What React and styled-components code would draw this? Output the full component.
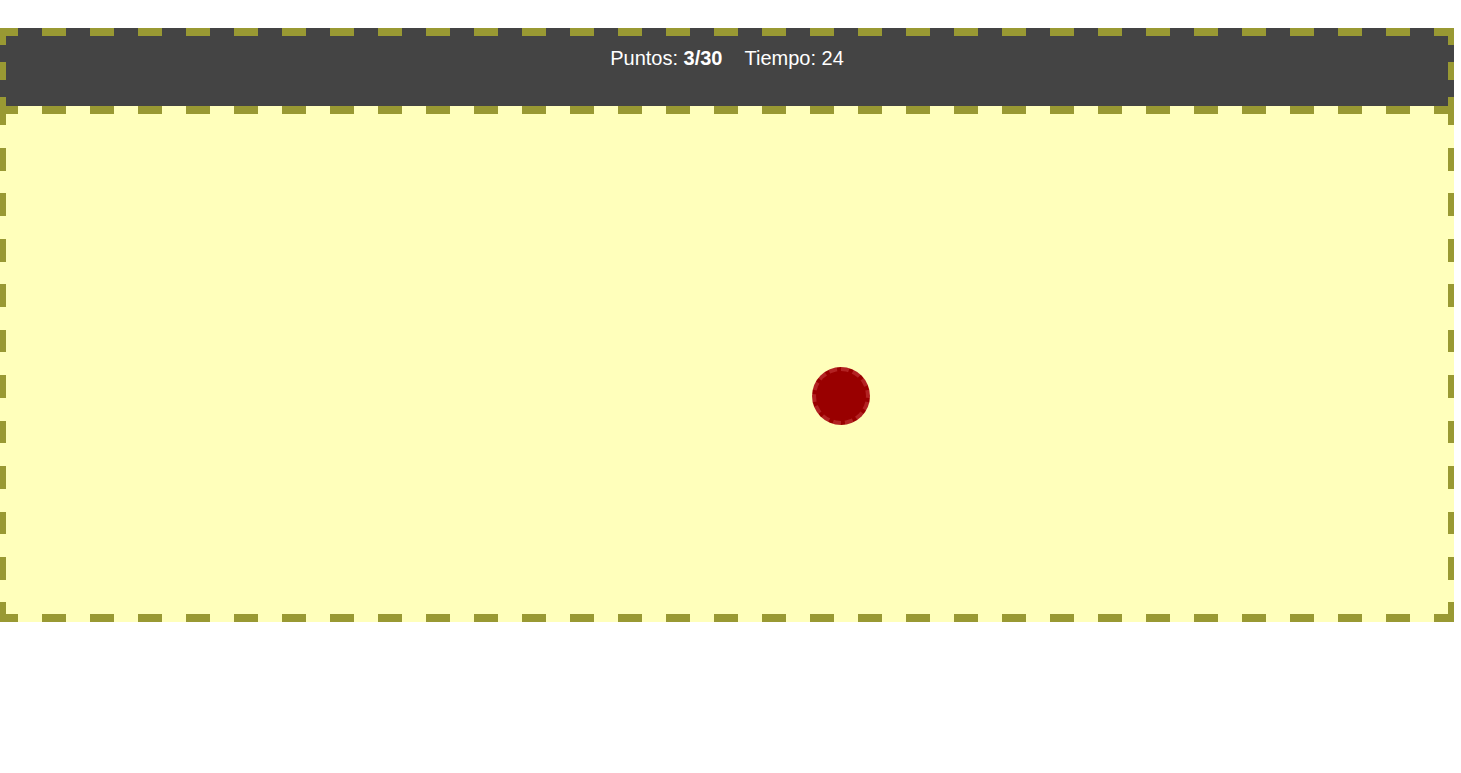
import React from "react"
import styled, { createGlobalStyle } from 'styled-components'

const OLIVE = '#999933'

const GlobalStyle = createGlobalStyle`
  body {
    margin: 0;
    background: #fff;
    font-family: "Liberation Sans", Arial, sans-serif;
  }
`

const App = () => {
  const target = { x: 806, y: 253 }

  return (
    <>
      <GlobalStyle />
      <Game>
        <Header>
          <Stat>Puntos: <b>3/30</b></Stat>
          <Stat>Tiempo: 24</Stat>
        </Header>
        <Board>
          <Target style={{ left: target.x, top: target.y }} />
        </Board>
      </Game>
    </>
  )
}

// dashed edges drawn as gradients so the dash rhythm matches
const hDash = `repeating-linear-gradient(90deg, ${OLIVE} 0 18px, transparent 18px 42px, ${OLIVE} 42px 48px)`

const Game = styled.div`
  width: 1454px;
  margin-top: 28px;
`

const Header = styled.header`
  height: 70px;
  box-sizing: content-box;
  border: solid transparent;
  border-width: 8px 6px 0;
  background:
    ${hDash} left top / 100% 8px no-repeat,
    repeating-linear-gradient(180deg, ${OLIVE} 0 17.5px, transparent 17.5px 34.5px) left top / 6px 100% no-repeat,
    repeating-linear-gradient(180deg, ${OLIVE} 0 17.5px, transparent 17.5px 34.5px) right top / 6px 100% no-repeat,
    #444;
  background-origin: border-box;
  color: #fff;
  display: flex;
  justify-content: center;
  align-items: flex-start;
  gap: 22px;
  font-size: 20px;
  line-height: 20px;
`

const Stat = styled.span`
  margin-top: 12px;

  b {
    font-weight: bold;
  }
`

const vDash = `repeating-linear-gradient(180deg, ${OLIVE} 0 19.28px, transparent 19.28px 42px, ${OLIVE} 42px 45.44px)`

const Board = styled.main`
  position: relative;
  display: block;
  height: 500px;
  border: solid transparent;
  border-width: 8px 6px;
  background:
    ${hDash} left top / 100% 8px no-repeat,
    ${hDash} left bottom / 100% 8px no-repeat,
    ${vDash} left top / 6px 100% no-repeat,
    ${vDash} right top / 6px 100% no-repeat,
    #ffffbb;
  background-origin: border-box;
`

const Target = styled.div`
  position: absolute;
  width: 50px;
  height: 50px;
  border-radius: 50%;
  border: 4px dashed #b22222;
  background: #990000;
`

export default App
